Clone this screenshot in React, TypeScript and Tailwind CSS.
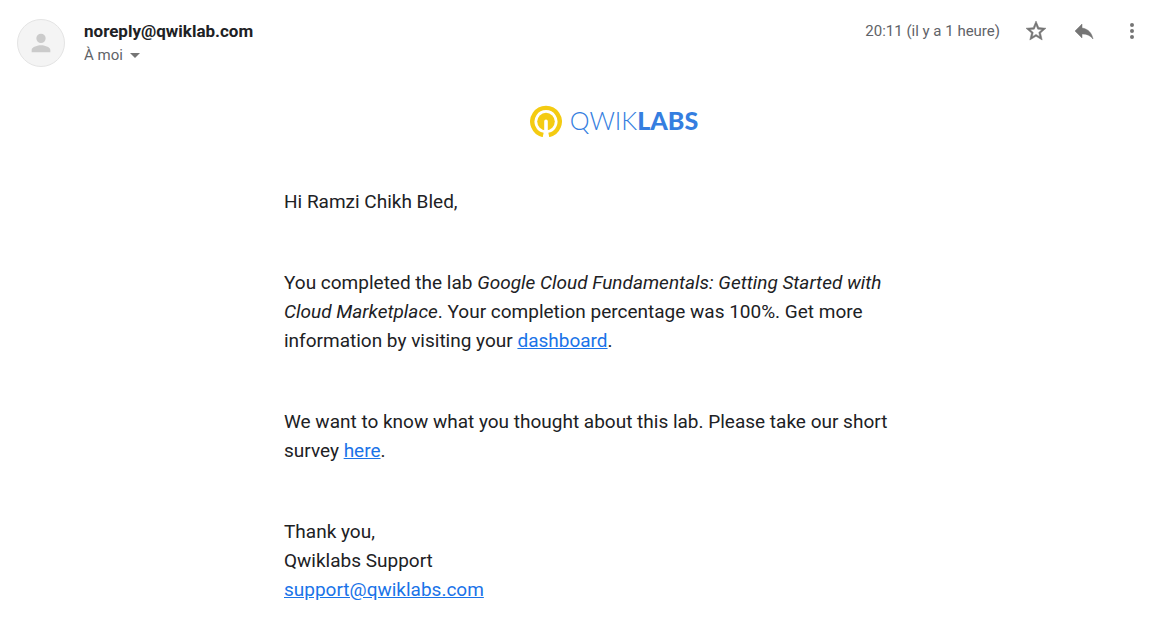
import React from "react";

const link = "text-[#1a73e8] underline";
const icon = "size-6 fill-[#757575]";

function Logo() {
  return (
    <a href="#qwiklabs" aria-label="Qwiklabs" className="flex items-start justify-center gap-2 text-[#357ee0]">
      <svg viewBox="0 0 32 32" className="size-8" fill="none" aria-hidden="true">
        <path d="M13.2 30A13.7 13.7 0 1 1 18.8 30" stroke="#f4cb12" strokeWidth="4.4" />
        <circle cx="16" cy="16.6" r="8.8" fill="#f4cb12" />
        <path d="M14.2 16.3A1.8 1.8 0 0 1 17.8 16.3V32H14.2Z" fill="#fff" />
      </svg>
      <span className="font-[Lato,sans-serif] text-[25px] leading-[30px]">
        <span className="font-light">QWIK</span>
        <span className="font-black">LABS</span>
      </span>
    </a>
  );
}

function Header() {
  return (
    <header className="flex items-start pt-[19px] pr-3.5 pl-[17px]">
      <div className="flex size-12 shrink-0 items-center justify-center rounded-full border border-[#e4e4e4] bg-[#f4f4f4]">
        <svg viewBox="0 0 24 24" className="size-7 fill-[#cbcbcb]" aria-hidden="true">
          <path d="M12 12a4 4 0 1 0 0-8 4 4 0 0 0 0 8Zm0 2c-2.67 0-8 1.34-8 4v2h16v-2c0-2.66-5.33-4-8-4Z" />
        </svg>
      </div>
      <div className="ml-[19px] flex flex-col items-start">
        <h1 className="text-[17px] leading-6 font-bold">noreply@qwiklab.com</h1>
        <button type="button" className="flex items-center text-[15px] leading-6 text-[#5f6368]">
          À moi
          <svg viewBox="0 0 24 24" className={icon} aria-hidden="true">
            <path d="M7 10l5 5 5-5z" />
          </svg>
        </button>
      </div>
      <div className="ml-auto flex items-center gap-6 text-[#5f6368]">
        <time className="text-[15px] leading-6">20:11 (il y a 1 heure)</time>
        <button type="button" aria-label="Suivre">
          <svg viewBox="0 0 24 24" className={icon} aria-hidden="true">
            <path stroke="#757575" strokeWidth="0.5" d="M22 9.24l-7.19-.62L12 2 9.19 8.63 2 9.24l5.46 4.73L5.82 21 12 17.27 18.18 21l-1.63-7.03L22 9.24zM12 15.4l-3.76 2.27 1-4.28-3.32-2.88 4.38-.38L12 6.1l1.71 4.04 4.38.38-3.32 2.88 1 4.28L12 15.4z" />
          </svg>
        </button>
        <button type="button" aria-label="Répondre">
          <svg viewBox="0 0 24 24" className={icon} aria-hidden="true">
            <path stroke="#757575" strokeWidth="0.5" d="M10 9V5l-7 7 7 7v-4.1c5 0 8.5 1.6 11 5.1-1-5-4-10-11-11z" />
          </svg>
        </button>
        <button type="button" aria-label="Plus">
          <svg viewBox="0 0 24 24" className={icon} aria-hidden="true">
            <path d="M12 8a2 2 0 1 0 0-4 2 2 0 0 0 0 4zm0 2a2 2 0 1 0 0 4 2 2 0 0 0 0-4zm0 6a2 2 0 1 0 0 4 2 2 0 0 0 0-4z" />
          </svg>
        </button>
      </div>
    </header>
  );
}

export default function App() {
  return (
    <main className="min-h-screen bg-white font-[Roboto,sans-serif] text-[#202124]">
      <Header />
      <div className="pt-[38px] pr-3.5 pb-5 pl-[84px]">
        <article className="mx-auto max-w-[660px]">
          <Logo />
          <div className="mt-[50px] flex max-w-[640px] flex-col gap-[52px] text-[19px] leading-[29px]">
            <p>Hi Ramzi Chikh Bled,</p>
            <p>
              You completed the lab <em>Google Cloud Fundamentals: Getting Started with Cloud Marketplace</em>. Your
              completion percentage was 100%. Get more information by visiting your{" "}
              <a href="#dashboard" className={link}>dashboard</a>.
            </p>
            <p>
              We want to know what you thought about this lab. Please take our short survey{" "}
              <a href="#survey" className={link}>here</a>.
            </p>
            <p>
              Thank you,
              <br />
              Qwiklabs Support
              <br />
              <a href="mailto:support@qwiklabs.com" className={link}>support@qwiklabs.com</a>
            </p>
          </div>
        </article>
      </div>
    </main>
  );
}
